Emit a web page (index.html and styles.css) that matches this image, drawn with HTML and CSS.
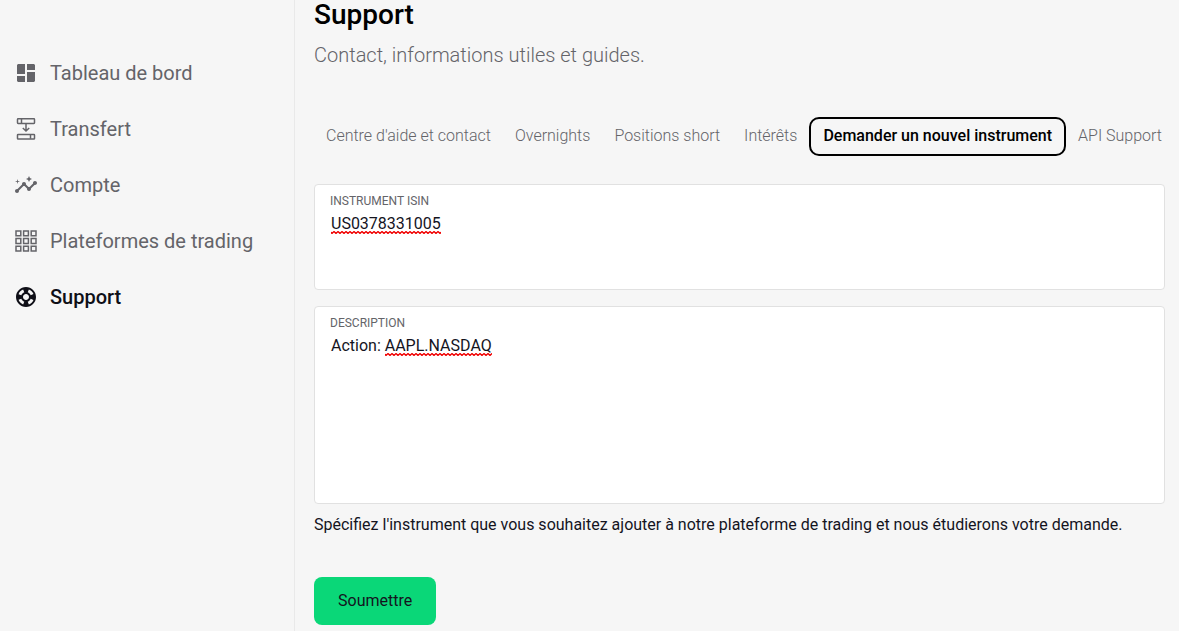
FILE: index.html
```html
<!DOCTYPE html>
<html lang="fr">
<head>
<meta charset="utf-8">
<meta name="viewport" content="width=device-width, initial-scale=1">
<title>Support</title>
<link rel="stylesheet" href="styles.css">
</head>
<body>
<div class="app">
  <aside class="sidebar">
    <nav class="nav" aria-label="Navigation principale">
      <a class="nav-link" href="#">
        <svg class="icon" viewBox="0 0 24 24" aria-hidden="true"><path fill="currentColor" d="M4 3h7v10H3V4zM13 3h7l1 1v5h-8zM13 11h8v9l-1 1h-7zM3 15h8v6H4l-1-1z"/></svg>
        <span>Tableau de bord</span>
      </a>
      <a class="nav-link" href="#">
        <svg class="icon" viewBox="0 0 24 24" aria-hidden="true"><g fill="none" stroke="currentColor" stroke-width="1.5"><rect x="3.5" y="1.8" width="17" height="4.6" rx=".6"/><path d="M7.5 2v4.4M16.5 17.4v4.4M12 6.4v7.4M8.8 11l3.2 3 3.2-3"/><rect x="3.5" y="17.4" width="17" height="4.6" rx=".6"/></g></svg>
        <span>Transfert</span>
      </a>
      <a class="nav-link" href="#">
        <svg class="icon" viewBox="0 0 24 24" aria-hidden="true"><path fill="currentColor" d="M21 8c-1.45 0-2.26 1.44-1.93 2.51l-3.55 3.56c-.3-.09-.74-.09-1.04 0l-2.55-2.55C12.27 10.45 11.46 9 10 9c-1.45 0-2.27 1.44-1.93 2.52l-4.56 4.55C2.44 15.74 1 16.55 1 18c0 1.1.9 2 2 2 1.45 0 2.26-1.44 1.93-2.51l4.55-4.56c.3.09.74.09 1.04 0l2.55 2.55C12.73 16.55 13.54 18 15 18c1.45 0 2.27-1.44 1.93-2.52l3.56-3.55C21.56 12.26 23 11.45 23 10c0-1.1-.9-2-2-2zM15 9l.94-2.07L18 6l-2.06-.93L15 3l-.92 2.07L12 6l2.08.93zM3.5 11L4 9l2-.5L4 8l-.5-2L3 8l-2 .5L3 9z"/></svg>
        <span>Compte</span>
      </a>
      <a class="nav-link" href="#">
        <svg class="icon" viewBox="0 0 24 24" aria-hidden="true"><path fill="none" stroke="currentColor" stroke-width="1.5" d="M2 2h4.8v4.8H2zM9.6 2h4.8v4.8H9.6zM17.2 2H22v4.8h-4.8zM2 9.6h4.8v4.8H2zM9.6 9.6h4.8v4.8H9.6zM17.2 9.6H22v4.8h-4.8zM2 17.2h4.8V22H2zM9.6 17.2h4.8V22H9.6zM17.2 17.2H22V22h-4.8z"/></svg>
        <span>Plateformes de trading</span>
      </a>
      <a class="nav-link nav-link-active" href="#" aria-current="page">
        <svg class="icon" viewBox="0 0 24 24" aria-hidden="true"><path fill="currentColor" fill-rule="evenodd" d="M12 2C6.48 2 2 6.48 2 12s4.48 10 10 10 10-4.48 10-10S17.52 2 12 2zm7.46 7.12l-2.78 1.15c-.51-1.36-1.58-2.44-2.95-2.94l1.15-2.78c2.1.8 3.77 2.47 4.58 4.57zM12 15c-1.66 0-3-1.34-3-3s1.34-3 3-3 3 1.34 3 3-1.34 3-3 3zM9.13 4.54l1.17 2.78c-1.38.5-2.47 1.59-2.98 2.97L4.54 9.13c.81-2.11 2.48-3.78 4.59-4.59zM4.54 14.87l2.78-1.15c.51 1.38 1.59 2.46 2.97 2.96l-1.17 2.78c-2.1-.81-3.77-2.48-4.58-4.59zm10.34 4.59l-1.15-2.78c1.37-.51 2.45-1.59 2.95-2.97l2.78 1.17c-.81 2.1-2.48 3.77-4.58 4.58z"/></svg>
        <span>Support</span>
      </a>
    </nav>
  </aside>
  <main class="content">
    <h1 class="title">Support</h1>
    <p class="subtitle">Contact, informations utiles et guides.</p>
    <nav class="tabs" aria-label="Rubriques du support">
      <a class="tab" href="#">Centre d'aide et contact</a>
      <a class="tab" href="#">Overnights</a>
      <a class="tab" href="#">Positions short</a>
      <a class="tab" href="#">Intérêts</a>
      <a class="tab tab-active" href="#" aria-current="page">Demander un nouvel instrument</a>
      <a class="tab" href="#">API Support</a>
    </nav>
    <form class="form">
      <div class="field">
        <label class="label" for="isin">INSTRUMENT ISIN</label>
        <textarea class="input" id="isin" rows="3" spellcheck="false">US0378331005</textarea>
        <svg class="squiggle squiggle-isin" aria-hidden="true"><defs><pattern id="wave" width="4" height="3" patternUnits="userSpaceOnUse"><path d="M-1 .5L1 2.5 3 .5 5 2.5" fill="none" stroke="#f00000" stroke-width="1.3"/></pattern></defs><rect width="100%" height="3" fill="url(#wave)"/></svg>
      </div>
      <div class="field">
        <label class="label" for="description">DESCRIPTION</label>
        <textarea class="input input-tall" id="description" rows="7" spellcheck="false">Action: AAPL.NASDAQ</textarea>
        <svg class="squiggle squiggle-description" aria-hidden="true"><rect width="100%" height="3" fill="url(#wave)"/></svg>
      </div>
      <p class="hint">Spécifiez l'instrument que vous souhaitez ajouter à notre plateforme de trading et nous étudierons votre demande.</p>
      <button class="submit" type="submit">Soumettre</button>
    </form>
  </main>
</div>
</body>
</html>
```

FILE: styles.css
```css
* {
  box-sizing: border-box;
}

body {
  margin: 0;
  background: #f6f6f6;
  color: #14141e;
  font-family: Roboto, "Liberation Sans", sans-serif;
  font-size: 16px;
  line-height: 20px;
}

.app {
  display: flex;
  min-height: 100vh;
}

.sidebar {
  flex: 0 0 295px;
  padding: 45px 14px;
  border-right: 1px solid #e9e9e9;
}

.nav {
  display: flex;
  flex-direction: column;
}

.nav-link {
  display: flex;
  align-items: center;
  gap: 12px;
  height: 56px;
  color: #646469;
  font-size: 20px;
  text-decoration: none;
}

.nav-link-active {
  color: #0f0f17;
  font-weight: 500;
}

.icon {
  flex: none;
  width: 24px;
  height: 24px;
}

.content {
  flex: 1;
  min-width: 0;
  padding: 0 14px 6px 19px;
}

.title {
  margin: 0;
  color: #000;
  font-size: 28px;
  font-weight: 500;
  line-height: 30px;
}

.subtitle {
  margin: 12px 0 0;
  color: #646469;
  font-size: 20px;
  font-weight: 300;
  line-height: 26px;
}

.tabs {
  display: flex;
  align-items: center;
  margin-top: 49px;
  white-space: nowrap;
}

.tab {
  padding: 7px 12px 9px;
  color: #646469;
  font-weight: 300;
  line-height: 19px;
  text-decoration: none;
}

.tab-active {
  border: 2px solid #000;
  border-radius: 10px;
  color: #000;
  font-weight: 500;
}

.form {
  display: flex;
  flex-direction: column;
  margin-top: 28px;
}

.field {
  position: relative;
  display: flex;
  flex-direction: column;
  margin-bottom: 16px;
  padding: 8px 15px;
  border: 1px solid #e1e1e1;
  border-radius: 4px;
  background: #fff;
}

.label {
  color: #646469;
  font-size: 12px;
  line-height: 16px;
}

.input {
  height: 72px;
  padding: 5px 1px 3px;
  border: 0;
  outline: 0;
  background: transparent;
  color: #14141e;
  font: inherit;
  resize: none;
}

.input-tall {
  height: 164px;
}

/* Spell-check marks over the text fields */
.squiggle {
  position: absolute;
  top: 46px;
  height: 3px;
  pointer-events: none;
}

.squiggle-isin {
  left: 16px;
  width: 110px;
}

.squiggle-description {
  left: 70px;
  width: 107px;
}

.hint {
  margin: 0;
}

.field + .hint {
  margin-top: -5px;
}

.submit {
  align-self: flex-start;
  margin-top: 42px;
  padding: 14px 24px;
  border: 0;
  border-radius: 8px;
  background: #0ad778;
  color: #14141e;
  font: inherit;
}
```
